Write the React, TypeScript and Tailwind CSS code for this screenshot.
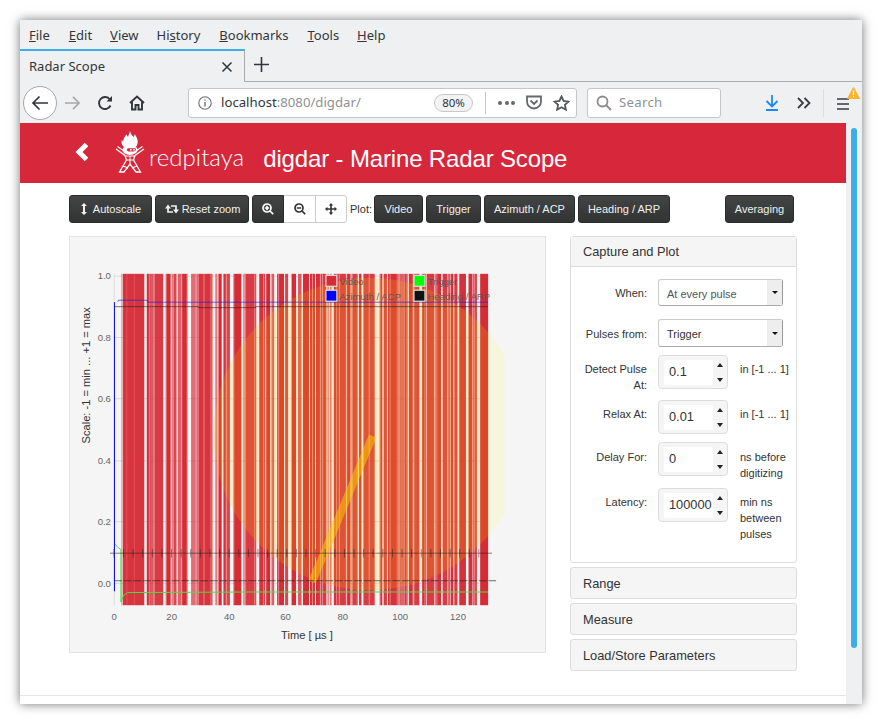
import * as React from "react"

const MENU: [string, string, string, string][] = [
  ["", "F", "ile", "mr-[19px]"],
  ["", "E", "dit", "mr-[18px]"],
  ["", "V", "iew", "mr-[18px]"],
  ["Hi", "s", "tory", "mr-[19px]"],
  ["", "B", "ookmarks", "mr-[19px]"],
  ["", "T", "ools", "mr-[18px]"],
  ["", "H", "elp", ""],
]

// Pulse bars read off the plot: x from, x to, opacity (page pixels)
const BARS: [number, number, number][] = [
  [120.5, 121.5, 0.5], [122, 143.5, 0.88], [146, 150, 0.92], [150, 153, 0.7], [153, 162.5, 0.85], [165, 170, 0.92],
  [171, 173, 0.5], [173, 176, 0.8], [177, 181, 0.65], [181.5, 187, 0.92], [190.5, 198, 0.6], [198, 212, 0.88],
  [215, 217, 0.7], [218, 221.5, 0.92], [223, 225.5, 0.88], [226, 229.5, 0.8], [233, 241, 0.92], [243, 245, 0.6],
  [245, 256, 0.85], [259, 265, 0.88], [266, 270, 0.92], [271, 274, 0.7], [277, 284, 0.95], [285, 288, 0.8],
  [291.5, 296, 0.92], [298, 302, 0.7], [303, 309, 0.92], [310, 315, 0.9], [316, 320, 0.9], [320.5, 326.5, 0.85],
  [327.5, 329, 0.5], [330, 332, 0.6], [334, 336.7, 0.9], [337, 346.7, 0.85], [347.3, 350.7, 0.92], [351.7, 358.3, 0.85],
  [359.3, 361.7, 0.9], [363.7, 375, 0.85], [380, 382.7, 0.9], [384, 387.3, 0.85], [388.3, 397.3, 0.9], [397.3, 405, 0.65],
  [405, 408.3, 0.85], [409.3, 413.3, 0.9], [414, 420, 0.85], [422.7, 426.7, 0.9], [427.3, 435, 0.85], [436, 441.7, 0.9],
  [443.3, 447.7, 0.85], [448, 450.7, 0.7], [451.3, 454, 0.9], [455, 458.3, 0.85], [460, 466.7, 0.9], [469.3, 473.3, 0.9],
  [474, 477.7, 0.85], [481, 489, 0.92],
]

// thin pale stripes that break the bars up
const STRIPES: number[] = []
for (let i = 0, x = 148; x < 480; i++) {
  STRIPES.push(x)
  x += 5 + ((i * 7) % 8)
}

const Y_TICKS: [string, number][] = [["1.0", 275.3], ["0.8", 337], ["0.6", 398.5], ["0.4", 461], ["0.2", 522], ["0.0", 584]]
const X_TICKS: [string, number][] = [["0", 113.3], ["20", 171], ["40", 229], ["60", 285.5], ["80", 343], ["100", 400.6], ["120", 458.7]]

const TRIGGER_MARKS = Array.from({ length: 39 }, (_, i) => 113 + i * 9.65)

function DarkButton({ className, children }: { className: string; children: React.ReactNode }) {
  return (
    <button className={`h-[28px] flex items-center justify-center gap-[3px] rounded-[3px] border border-[#2b2b2b] bg-gradient-to-b from-[#434544] to-[#323433] text-[11px] text-[#f0f0f0] ${className}`}>
      {children}
    </button>
  )
}

function Spinner({ value }: { value: string }) {
  return (
    <div className="w-[70px] h-[34px] shrink-0 flex items-center rounded-[4px] border border-[#ddd] bg-[#f5f5f5] pl-[5px]">
      <div className="w-[49px] h-[25px] bg-white rounded-[2px] pl-[5px] flex items-center text-[12.8px] text-[#333]">{value}</div>
      <div className="w-[13px] flex flex-col items-center gap-[11px]">
        <div className="w-0 h-0 border-x-[3px] border-x-transparent border-b-[4px] border-b-[#222]" />
        <div className="w-0 h-0 border-x-[3px] border-x-transparent border-t-[4px] border-t-[#222]" />
      </div>
    </div>
  )
}

function Select({ value, className, dark }: { value: string; className: string; dark?: boolean }) {
  return (
    <div className={`w-[125px] flex items-stretch rounded-[3px] border border-[#ccc] border-r-[#999] border-b-[#aaa] bg-white ${className}`}>
      <div className={`flex-1 flex items-center pl-[8px] pt-[3px] text-[11px] ${dark ? "text-[#333]" : "text-[#555]"}`}>{value}</div>
      <div className="w-[15px] bg-[#eee] flex items-center justify-center">
        <div className="w-0 h-0 border-x-[3px] border-x-transparent border-t-[3px] border-t-[#111]" />
      </div>
    </div>
  )
}

function FormRow({ label, className, children }: { label: React.ReactNode; className: string; children: React.ReactNode }) {
  return (
    <div className={`flex ${className}`}>
      <div className="w-[76px] max-h-[27px] shrink-0 text-right text-[11px] leading-[16px] text-[#333]">{label}</div>
      <div className="ml-[11px] flex items-start min-w-0">{children}</div>
    </div>
  )
}

function Suffix({ className, children }: { className: string; children: React.ReactNode }) {
  return <div className={`ml-[12px] w-[52px] max-h-[34px] text-[11px] leading-[16px] text-[#333] ${className}`}>{children}</div>
}

function Collapsed({ title }: { title: string }) {
  return (
    <div className="h-[32px] mt-[4px] flex items-center pl-[12px] pt-[1px] rounded-[3px] border border-[#ddd] bg-[#f5f5f5] text-[12.8px] text-[#333]">
      {title}
    </div>
  )
}

function Plot() {
  return (
    <svg viewBox="69 236 477 417" className="w-full h-full block font-['Liberation_Sans',sans-serif]">
      <defs>
        <clipPath id="plotArea"><rect x="120" y="273" width="369.5" height="333" /></clipPath>
        <clipPath id="circleArea"><rect x="190" y="260" width="315.7" height="350" /></clipPath>
      </defs>
      <rect x="120.5" y="273" width="368.5" height="333" fill="#fdf4f4" />
      {Y_TICKS.map(([, y]) => <line key={y} x1="113" x2="481" y1={y} y2={y} stroke="#d8d8d8" />)}
      {X_TICKS.map(([, x]) => <line key={x} x1={x} x2={x} y1="273" y2="606" stroke="#dcdcdc" />)}
      {BARS.map(([a, b, o]) => <rect key={a} x={a} y="273" width={b - a} height="333" fill="#d62c36" opacity={Math.min(1, o + 0.08)} />)}
      {STRIPES.map((x) => <rect key={x} x={x} y="273" width="1" height="333" fill="#fff" opacity="0.4" />)}
      <rect x="125.5" y="273" width="1" height="333" fill="#fff" opacity="0.15" />
      <rect x="133" y="273" width="1" height="333" fill="#fff" opacity="0.15" />
      <circle cx="370" cy="434" r="157" fill="#ffff00" opacity="0.1" clipPath="url(#circleArea)" />
      <g clipPath="url(#plotArea)">
        <circle cx="370" cy="434" r="157" fill="#ff9000" opacity="0.09" />
      </g>
      <line x1="312" y1="583" x2="373" y2="436" stroke="#ffd000" strokeWidth="8" opacity="0.5" />
      <polyline points="113.7,544 116.7,547.7 120,550 120,602.7 122.7,596 126.7,593.3 250,592.7 489,592.7" fill="none" stroke="#47e047" />
      <polyline points="117,301 117.5,299.5 146,299.5 147,301.5 489,301.5" fill="none" stroke="#1a1ae6" opacity="0.65" />
      <line x1="113.5" x2="113.5" y1="301.5" y2="592" stroke="#0000f0" />
      <polyline points="113,306 198,306 198,307 255,307 255,306 489,306" fill="none" stroke="#222" opacity="0.6" />
      <line x1="113" x2="497" y1="581.4" y2="581.4" stroke="#222" opacity="0.65" strokeDasharray="8 1.65" />
      <line x1="109" x2="493" y1="553.7" y2="553.7" stroke="#222" opacity="0.55" />
      {TRIGGER_MARKS.map((x) => <line key={x} x1={x} x2={x} y1="549.5" y2="558" stroke="#222" opacity="0.5" />)}

      {Y_TICKS.map(([t, y]) => <text key={t} x="110" y={y + 3.4} textAnchor="end" fontSize="9.6" fill="#666">{t}</text>)}
      {X_TICKS.map(([t, x]) => <text key={t} x={x} y="621" textAnchor="middle" fontSize="9.6" fill="#666">{t}</text>)}
      <text x="307" y="640" textAnchor="middle" fontSize="11.2" fill="#333">Time [ µs ]</text>
      <text transform="translate(88.5 375) rotate(-90)" textAnchor="middle" fontSize="11.2" fill="#333">Scale: -1 = min ... +1 = max</text>

      {([
        [326, 274.5, "#d62c36", "Video"],
        [414.5, 274.5, "#00ff00", "Trigger"],
        [326, 289.5, "#0000ff", "Azimuth / ACP"],
        [414.5, 289.5, "#111111", "Heading / ARP"],
      ] as [number, number, string, string][]).map(([x, y, c, t]) => (
        <g key={t}>
          <rect x={x} y={y} width="11" height="11" fill={c} stroke="#ddd" strokeWidth="1.2" />
          <text x={x + 13.5} y={y + 9.5} fontSize="9.6" fill="#555" opacity="0.9">{t}</text>
        </g>
      ))}
    </svg>
  )
}

function Logo() {
  return (
    <svg width="30" height="42" viewBox="0 0 30 42" className="shrink-0" fill="none">
      {/* flame */}
      <path d="M15 0c.5 3 2 4 3.500 6 .8-.8 1-1.600 1-3 2 2.500 3.500 5.500 3.200 8.500-.2 2-1 3.500-2 4.500H9c-2-1.500-3-4-2.300-7 .6.8 1 1.200 1.600 1.500 0-3.500 1.500-4.500 3-7 .8.7 1.200 1.500 1.700 2.500.8-2.500 1.500-4 2-6z" fill="#fff" />
      {/* head */}
      <ellipse cx="15" cy="19" rx="7.500" ry="5" fill="#fff" />
      <rect x="12" y="17.300" width="9" height="3.200" rx="1.400" fill="#d6273b" />
      <rect x="15" y="18" width="1.600" height="1.600" fill="#fff" />
      <rect x="18.200" y="18" width="1.600" height="1.600" fill="#fff" />
      {/* arms and legs */}
      <path d="M1 18l9 6.500 1.500 4.500L4.500 41H9l6-8 6 8h4.500L18.500 29 20 24.500 29 18" stroke="#fff" strokeWidth="1.3" />
      <path d="M2.500 15.500l8 5.500M27.500 15.500l-8 5.500M11 25h8M11.500 29h7M8 35l5 2M22 35l-5 2M15 25v8" stroke="#fff" strokeWidth="1.100" />
    </svg>
  )
}

function BrowserChrome() {
  return (
    <div className="font-['Noto_Sans',sans-serif] text-[#31363b] bg-[#eff0f1] shrink-0">
      <div className="h-[29px] flex items-center pl-[9px] text-[13px] pt-[2px]">
        {MENU.map(([a, b, c, gap]) => (
          <span key={c} className={gap}>
            {a}<u>{b}</u>{c}
          </span>
        ))}
      </div>
      <div className="h-[33px] flex">
        <div className="w-[225px] border-t-2 border-t-[#3daee9] border-r border-r-[#a9abad] flex items-center pl-[9px] pr-[11px] justify-between text-[13px]">
          <span>Radar Scope</span>
          <svg width="12" height="12" viewBox="0 0 12 12" stroke="#31363b" strokeWidth="1.5"><path d="M1.500 1.500l9 9M10.500 1.500l-9 9" /></svg>
        </div>
        <div className="flex-1 border-b border-b-[#a9abad] pl-[9px] pt-[8px]">
          <svg width="15" height="15" viewBox="0 0 15 15" stroke="#31363b" strokeWidth="1.6"><path d="M7.500 0v15M0 7.500h15" /></svg>
        </div>
      </div>
      <div className="h-[41px] flex items-center">
        <div className="ml-[3px] w-[34px] h-[34px] rounded-full border border-[#a8a8a8] bg-white flex items-center justify-center">
          <svg width="18" height="16" viewBox="0 0 18 16" fill="none" stroke="#31363b" strokeWidth="1.7"><path d="M17 8H2M8.500 1.500L2 8l6.500 6.500" /></svg>
        </div>
        <svg width="17" height="16" viewBox="0 0 18 16" fill="none" stroke="#a8a8a8" strokeWidth="1.7" className="ml-[7px]"><path d="M1 8h15M9.500 1.500L16 8l-6.500 6.500" /></svg>
        <svg width="16" height="16" viewBox="0 0 16 16" fill="none" stroke="#31363b" strokeWidth="1.9" className="ml-[16px]">
          <path d="M13.500 10.500a6 6 0 1 1-.6-6" />
          <path d="M15 1v5.500H9.500z" fill="#31363b" stroke="none" />
        </svg>
        <svg width="16" height="16" viewBox="0 0 16 16" className="ml-[16px]" fill="none" stroke="#31363b" strokeWidth="1.900">
          <path d="M1 8l7-6.500L15 8" />
          <path d="M3 7v7.500h3.500V10h3v4.500H13V7" />
        </svg>

        <div className="ml-[43px] w-[389px] h-[30px] rounded-[3px] border border-[#c4c6c8] bg-white flex items-center">
          <svg width="14" height="14" viewBox="0 0 14 14" fill="none" stroke="#6b6e70" strokeWidth="1.100" className="ml-[9px]">
            <circle cx="7" cy="7" r="6.200" />
            <path d="M7 6v4.400M7 3.400v1.400" strokeWidth="1.400" />
          </svg>
          <span className="ml-[9px] w-[140px] text-[13.2px] whitespace-nowrap">localhost<span className="text-[#8f9194]">:8080/digdar/</span></span>
          <div className="ml-[73px] w-[39px] h-[18px] rounded-full border border-[#c8c8c8] bg-[#f3f3f3] flex items-center justify-center text-[11.5px]">80%</div>
          <div className="ml-[12px] w-px h-[22px] bg-[#c4c6c8]" />
          <div className="ml-[12px] flex gap-[2.500px]">
            <div className="w-[4px] h-[4px] rounded-full bg-[#66696c]" />
            <div className="w-[4px] h-[4px] rounded-full bg-[#66696c]" />
            <div className="w-[4px] h-[4px] rounded-full bg-[#66696c]" />
          </div>
          <svg width="16" height="15" viewBox="0 0 16 15" fill="none" stroke="#66696c" strokeWidth="1.800" className="ml-[11px]">
            <path d="M1 1.500h14v5a7 7 0 0 1-14 0z" />
            <path d="M4.500 5.500L8 9l3.500-3.500" />
          </svg>
          <svg width="17" height="16" viewBox="0 0 17 16" fill="none" stroke="#55585b" strokeWidth="1.800" className="ml-[11px]">
            <path d="M8.500 1.500l2.100 4.500 4.900.6-3.600 3.300 1 4.800-4.400-2.400-4.400 2.400 1-4.800L1.500 6.600l4.900-.6z" />
          </svg>
        </div>

        <div className="ml-[10px] w-[134px] h-[30px] rounded-[3px] border border-[#c4c6c8] bg-white flex items-center">
          <svg width="16" height="16" viewBox="0 0 16 16" fill="none" stroke="#8a8c8f" strokeWidth="1.800" className="ml-[8px]">
            <circle cx="6.500" cy="6.500" r="5" />
            <path d="M10 10l5 5" />
          </svg>
          <span className="ml-[7px] pt-[1px] text-[13.2px] tracking-[0.3px] text-[#8f9194]">Search</span>
        </div>

        <svg width="14" height="16" viewBox="0 0 14 16" fill="none" stroke="#1e88f5" strokeWidth="1.800" className="ml-[44px]">
          <path d="M7 0v11M1.500 6L7 11.500 12.500 6M1 15h12" />
        </svg>
        <svg width="14" height="12" viewBox="0 0 14 12" fill="none" stroke="#3a3d40" strokeWidth="1.800" className="ml-[18px]">
          <path d="M1 1l5 5-5 5M7.500 1l5 5-5 5" />
        </svg>
        <div className="ml-[12px] w-px h-[28px] bg-[#dcdde0]" />
        <div className="relative ml-[13px] w-[12px]">
          <svg width="12" height="12" viewBox="0 0 12 12" stroke="#3a3d40" strokeWidth="1.600" className="mt-[3px] block"><path d="M0 1h12M0 6h12M0 11h12" /></svg>
          <svg width="13" height="12" viewBox="0 0 13 12" className="absolute -top-[8px] left-[10px]">
            <path d="M6.500 .5L12.500 11.500H.5z" fill="#fcb32c" stroke="#fcb32c" strokeLinejoin="round" />
            <path d="M6.500 3.500v4.500M6.500 9v1.300" stroke="#fff" strokeWidth="1.300" />
          </svg>
        </div>
      </div>
    </div>
  )
}

export default function App() {
  return (
    <div className="w-[882px] h-[724px] bg-white pt-[20px] pl-[20px] overflow-hidden">
      <div className="w-[842px] h-[684px] flex flex-col shadow-[0_0_10px_rgba(0,0,0,0.55)] bg-white">
        <BrowserChrome />
        <div className="flex-1 flex min-h-0 font-['Liberation_Sans',sans-serif]">
          <div className="w-[826px] flex flex-col">
            <div className="h-[60px] bg-[#d6273b] flex items-center text-white shrink-0">
              <svg width="16" height="20" viewBox="0 0 16 20" fill="none" stroke="#fff" strokeWidth="5" className="ml-[54px] mb-[2px]">
                <path d="M12.500 2.500L5 10l7.500 7.500" />
              </svg>
              <div className="ml-[25px] mb-[2px]"><Logo /></div>
              <span className="ml-[4px] mt-[7px] text-[24px] font-light font-['Lato',sans-serif]">redpitaya</span>
              <span className="ml-[19px] mt-[12px] text-[24px] tracking-[-0.15px]">digdar - Marine Radar Scope</span>
            </div>

            <div className="mt-[12px] ml-[49px] flex items-center gap-[3px] shrink-0">
              <DarkButton className="w-[83px]">
                <svg width="8" height="12" viewBox="0 0 8 12" fill="#f0f0f0"><path d="M4 0l3 3H5v6h2l-3 3-3-3h2V3H1z" /></svg>
                <span className="ml-[2px]">Autoscale</span>
              </DarkButton>
              <DarkButton className="w-[94px]">
                <svg width="14" height="12" viewBox="0 0 14 12" className="ml-[1px]">
                  <path d="M3 5v4h5M11 7V3H6" fill="none" stroke="#f0f0f0" strokeWidth="1.700" />
                  <path d="M0 5.500L3 1.500l3 4zM8 6.500h6l-3 4z" fill="#f0f0f0" />
                </svg>
                <span>Reset zoom</span>
              </DarkButton>
              <div className="h-[28px] w-[95px] flex rounded-[3px] border border-[#ccc] bg-white text-[#333]">
                <div className="w-[32px] -ml-px -my-px rounded-l-[3px] border border-[#2b2b2b] bg-gradient-to-b from-[#434544] to-[#323433] text-white flex items-center justify-center">
                  <svg width="12" height="12" viewBox="0 0 12 12" fill="none" stroke="currentColor" strokeWidth="1.700"><path d="M5 2.800v4.400M2.800 5h4.400M8 8l3.200 3.200M9 5a4 4 0 1 1-8 0 4 4 0 0 1 8 0z" /></svg>
                </div>
                <div className="w-[32px] border-r border-r-[#ccc] flex items-center justify-center">
                  <svg width="12" height="12" viewBox="0 0 12 12" fill="none" stroke="currentColor" strokeWidth="1.700"><path d="M2.800 5h4.400M8 8l3.200 3.200M9 5a4 4 0 1 1-8 0 4 4 0 0 1 8 0z" /></svg>
                </div>
                <div className="flex-1 flex items-center justify-center">
                  <svg width="12" height="12" viewBox="0 0 12 12" fill="#333"><path d="M6 0l2.200 2.400H6.800v2.800h2.800V3.800L12 6 9.600 8.200V6.800H6.800v2.800h1.400L6 12 3.800 9.600h1.400V6.800H2.400v1.400L0 6l2.400-2.200v1.400h2.800V2.400H3.800z" /></svg>
                </div>
              </div>
              <span className="text-[11px] text-[#333] w-[21px]">Plot:</span>
              <DarkButton className="w-[49px]">Video</DarkButton>
              <DarkButton className="w-[55px]">Trigger</DarkButton>
              <DarkButton className="w-[91px]">Azimuth / ACP</DarkButton>
              <DarkButton className="w-[92px]">Heading / ARP</DarkButton>
              <DarkButton className="w-[69px] ml-[52px]">Averaging</DarkButton>
            </div>

            <div className="mt-[13px] ml-[49px] flex items-start shrink-0">
              <div className="w-[477px] h-[417px] bg-[#f5f5f5] border border-[#e3e3e3] shrink-0">
                <Plot />
              </div>
              <div className="ml-[24px] w-[227px] shrink-0">
                <div className="h-[327px] rounded-[3px] border border-[#ddd] bg-white">
                  <div className="h-[30px] flex items-center pl-[12px] bg-[#f5f5f5] border-b border-b-[#ddd] text-[12.8px] text-[#333]">
                    Capture and Plot
                  </div>
                  <div>
                    <FormRow label={<span className="block pt-[6px]">When:</span>} className="pt-[12px]">
                      <Select value="At every pulse" className="h-[27px]" />
                    </FormRow>
                    <FormRow label={<span className="block pt-[7px]">Pulses from:</span>} className="pt-[13px]">
                      <Select value="Trigger" className="h-[28px]" dark />
                    </FormRow>
                    <FormRow label={<span className="block pt-[6px] pl-[10px]">Detect Pulse At:</span>} className="pt-[8px]">
                      <Spinner value="0.1" />
                      <Suffix className="pt-[6px]">in [-1 ... 1]</Suffix>
                    </FormRow>
                    <FormRow label={<span className="block pt-[6px]">Relax At:</span>} className="pt-[11px]">
                      <Spinner value="0.01" />
                      <Suffix className="pt-[6px]">in [-1 ... 1]</Suffix>
                    </FormRow>
                    <FormRow label={<span className="block pt-[7px]">Delay For:</span>} className="pt-[8px]">
                      <Spinner value="0" />
                      <Suffix className="pt-[7px]">ns before digitizing</Suffix>
                    </FormRow>
                    <FormRow label={<span className="block pt-[6px]">Latency:</span>} className="pt-[12px]">
                      <Spinner value="100000" />
                      <div className="ml-[12px] w-[52px] pt-[6px] text-[11px] leading-[16px] text-[#333]">min ns between pulses</div>
                    </FormRow>
                  </div>
                </div>
                <Collapsed title="Range" />
                <Collapsed title="Measure" />
                <Collapsed title="Load/Store Parameters" />
              </div>
            </div>

            <div className="mt-[24px] h-px bg-[#e5e5e5] shrink-0" />
          </div>
          <div className="w-[16px] bg-[#eff0f1] pt-[5px] flex justify-center shrink-0">
            <div className="w-[6px] h-[520px] rounded-full bg-[#3daee9]" />
          </div>
        </div>
      </div>
    </div>
  )
}
